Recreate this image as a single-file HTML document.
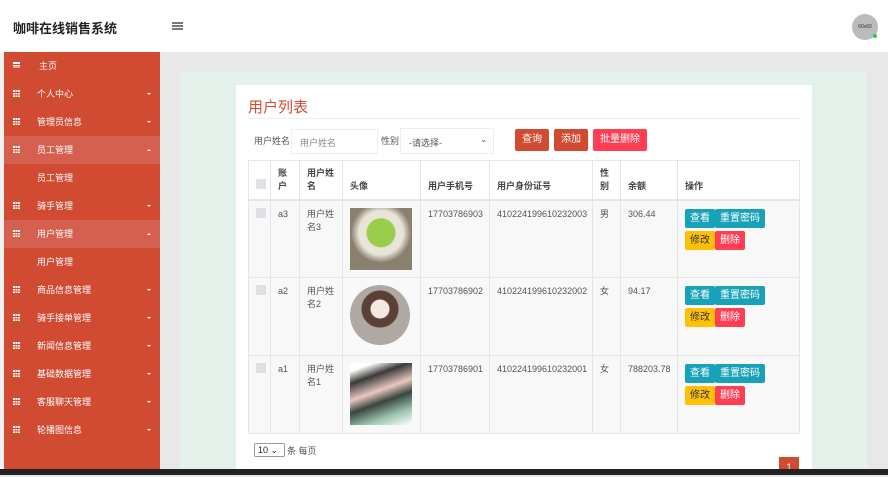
<!DOCTYPE html>
<html><head><meta charset="utf-8"><style>
*{margin:0;padding:0;box-sizing:border-box}
body{width:888px;height:475px;overflow:hidden;background:#e8e8e8;font-family:"Liberation Sans","Noto Sans CJK SC",sans-serif;position:relative;font-size:9px;color:#555}
.a{position:absolute}
#hdr{left:0;top:0;width:888px;height:52px;background:#fff}
#side{left:4px;top:52px;width:156px;height:418px;background:#d14a32}
.it{position:absolute;left:0;width:156px;height:28px;color:#fff;font-size:9px;line-height:28px}
.it .ic{position:absolute;left:9px;top:10px;width:7px;height:7px;background:
linear-gradient(90deg,#fff 2px,transparent 2px,transparent 2.5px,#fff 2.5px,#fff 4.5px,transparent 4.5px,transparent 5px,#fff 5px)}
.it .ic:after{content:"";position:absolute;left:0;top:2px;width:7px;height:0.6px;background:#d14a32;box-shadow:0 2.5px 0 #d14a32}
.it .t{position:absolute;left:33px}
.it .ar{position:absolute;right:9px;top:13px;border-left:2.5px solid transparent;border-right:2.5px solid transparent;border-top:2.5px solid #fff}
.it .up{border-top:0;border-bottom:2.5px solid #fff}
.hl{background:#d66050}
#bar{left:0;top:469px;width:888px;height:6px;background:#222}
table{border-collapse:collapse;position:absolute;left:248px;top:160px;width:552px;table-layout:fixed}
td,th{border:1px solid #e6e6e6;vertical-align:top;padding:7px 7px;text-align:left;font-size:9px;line-height:13px;color:#555;overflow:hidden}
th{font-weight:bold;color:#444;vertical-align:bottom;height:39px;padding:4px 7px 6px;border-bottom:2px solid #e6e6e6}
tbody td{background:#f8f8f8;height:78px}
td:last-child{padding-top:8px}
.cb{display:inline-block;width:10px;height:10px;background:#dde0e4}
.b{display:inline-block;color:#fff;font-size:10px;height:19px;line-height:19px;padding:0 5px;border-radius:2px;margin-bottom:3px}
.bl{background:#17a2b8}.by{background:#ffc107;color:#333}.br{background:#ff3e54}
</style></head><body>
<div class="a" id="hdr">
<div class="a" style="left:13px;top:18px;font-size:13px;font-weight:bold;color:#222">咖啡在线销售系统</div>
<div class="a" style="left:172px;top:22px;width:11px;height:1.5px;background:#777;box-shadow:0 3px 0 #777,0 6px 0 #777"></div>
<div class="a" style="left:852px;top:14px;width:26px;height:26px;border-radius:50%;background:#bbb;font-size:5px;color:#333;text-align:center;line-height:26px">60x60</div>
<div class="a" style="left:873px;top:34px;width:4px;height:4px;border-radius:50%;background:#3c3"></div>
</div>
<div class="a" style="left:0;top:52px;width:4px;height:418px;background:#f1f1f1"></div>
<div class="a" id="side">
<div class="it" style="top:0"><span class="ic" style="background:#fff;width:7px;height:6px;top:10px"></span><span class="t" style="left:35px">主页</span></div>
<div class="it" style="top:28px"><span class="ic"></span><span class="t">个人中心</span><span class="ar"></span></div>
<div class="it" style="top:56px"><span class="ic"></span><span class="t">管理员信息</span><span class="ar"></span></div>
<div class="it hl" style="top:84px"><span class="ic"></span><span class="t">员工管理</span><span class="ar up"></span></div>
<div class="it" style="top:112px"><span class="t">员工管理</span></div>
<div class="it" style="top:140px"><span class="ic"></span><span class="t">骑手管理</span><span class="ar"></span></div>
<div class="it hl" style="top:168px"><span class="ic"></span><span class="t">用户管理</span><span class="ar up"></span></div>
<div class="it" style="top:196px"><span class="t">用户管理</span></div>
<div class="it" style="top:224px"><span class="ic"></span><span class="t">商品信息管理</span><span class="ar"></span></div>
<div class="it" style="top:252px"><span class="ic"></span><span class="t">骑手接单管理</span><span class="ar"></span></div>
<div class="it" style="top:280px"><span class="ic"></span><span class="t">新闻信息管理</span><span class="ar"></span></div>
<div class="it" style="top:308px"><span class="ic"></span><span class="t">基础数据管理</span><span class="ar"></span></div>
<div class="it" style="top:336px"><span class="ic"></span><span class="t">客服聊天管理</span><span class="ar"></span></div>
<div class="it" style="top:364px"><span class="ic"></span><span class="t">轮播图信息</span><span class="ar"></span></div>
</div>
<div class="a" style="left:180px;top:72px;width:687px;height:400px;background:#e4f1eb"></div>
<div class="a" style="left:236px;top:85px;width:576px;height:390px;background:#fff"></div>
<div class="a" style="left:248px;top:96px;font-size:15px;color:#d14a32">用户列表</div>
<div class="a" style="left:248px;top:118px;width:552px;height:1px;background:#eee"></div>
<div class="a" style="left:254px;top:134px;font-size:9px">用户姓名</div>
<div class="a" style="left:291px;top:129px;width:87px;height:25px;border:1px solid #eee;padding:6px 8px;color:#888">用户姓名</div>
<div class="a" style="left:381px;top:134px">性别</div>
<div class="a" style="left:400px;top:128px;width:94px;height:26px;border:1px solid #eee;padding:7px 8px;color:#555">-请选择-<span style="position:absolute;right:6px;top:6px;font-size:8px">⌄</span></div>
<div class="a b" style="left:515px;top:129px;height:22px;line-height:22px;padding:0 7px;background:#d14a32">查询</div>
<div class="a b" style="left:554px;top:129px;height:22px;line-height:22px;padding:0 7px;background:#d14a32">添加</div>
<div class="a b" style="left:593px;top:129px;height:22px;line-height:22px;padding:0 7px;background:#ff3e54">批量删除</div>
<table>
<colgroup><col style="width:22px"><col style="width:29px"><col style="width:43px"><col style="width:78px"><col style="width:69px"><col style="width:103px"><col style="width:28px"><col style="width:57px"><col></colgroup>
<thead><tr><th><span class="cb"></span></th><th>账<br>户</th><th>用户姓<br>名</th><th>头像</th><th>用户手机号</th><th>用户身份证号</th><th>性<br>别</th><th>余额</th><th>操作</th></tr></thead>
<tbody>
<tr><td><span class="cb"></span></td><td>a3</td><td>用户姓<br>名3</td><td><div style="width:62px;height:62px;background:radial-gradient(circle at 50% 40%,#9acd4c 0 14px,#e8e4d8 15px 22px,#8a8070 30px)"></div></td><td>17703786903</td><td>410224199610232003</td><td>男</td><td>306.44</td><td><span class="b bl">查看</span><span class="b bl">重置密码</span><br><span class="b by">修改</span><span class="b br">删除</span></td></tr>
<tr><td><span class="cb"></span></td><td>a2</td><td>用户姓<br>名2</td><td><div style="width:60px;height:60px;border-radius:50%;background:radial-gradient(circle at 50% 40%,#f5e8e0 0 9px,#5a4035 10px 18px,#b0a8a2 19px)"></div></td><td>17703786902</td><td>410224199610232002</td><td>女</td><td>94.17</td><td><span class="b bl">查看</span><span class="b bl">重置密码</span><br><span class="b by">修改</span><span class="b br">删除</span></td></tr>
<tr><td><span class="cb"></span></td><td>a1</td><td>用户姓<br>名1</td><td><div style="width:62px;height:62px;background:linear-gradient(160deg,#fff 10%,#3a3a38 25%,#e8c8c0 45%,#3a4540 60%,#9cc4b0 80%,#fff)"></div></td><td>17703786901</td><td>410224199610232001</td><td>女</td><td>788203.78</td><td><span class="b bl">查看</span><span class="b bl">重置密码</span><br><span class="b by">修改</span><span class="b br">删除</span></td></tr>
</tbody></table>
<div class="a" style="left:254px;top:443px;width:31px;height:14px;border:1px solid #999;border-radius:2px;font-size:9px;padding:1px 3px;color:#222">10 ⌄</div>
<div class="a" style="left:287px;top:444px">条 每页</div>
<div class="a" style="left:779px;top:457px;width:20px;height:18px;background:#d14a32;color:#fff;text-align:center;line-height:20px;font-size:9px">1</div>
<div class="a" id="bar"></div>
</body></html>
